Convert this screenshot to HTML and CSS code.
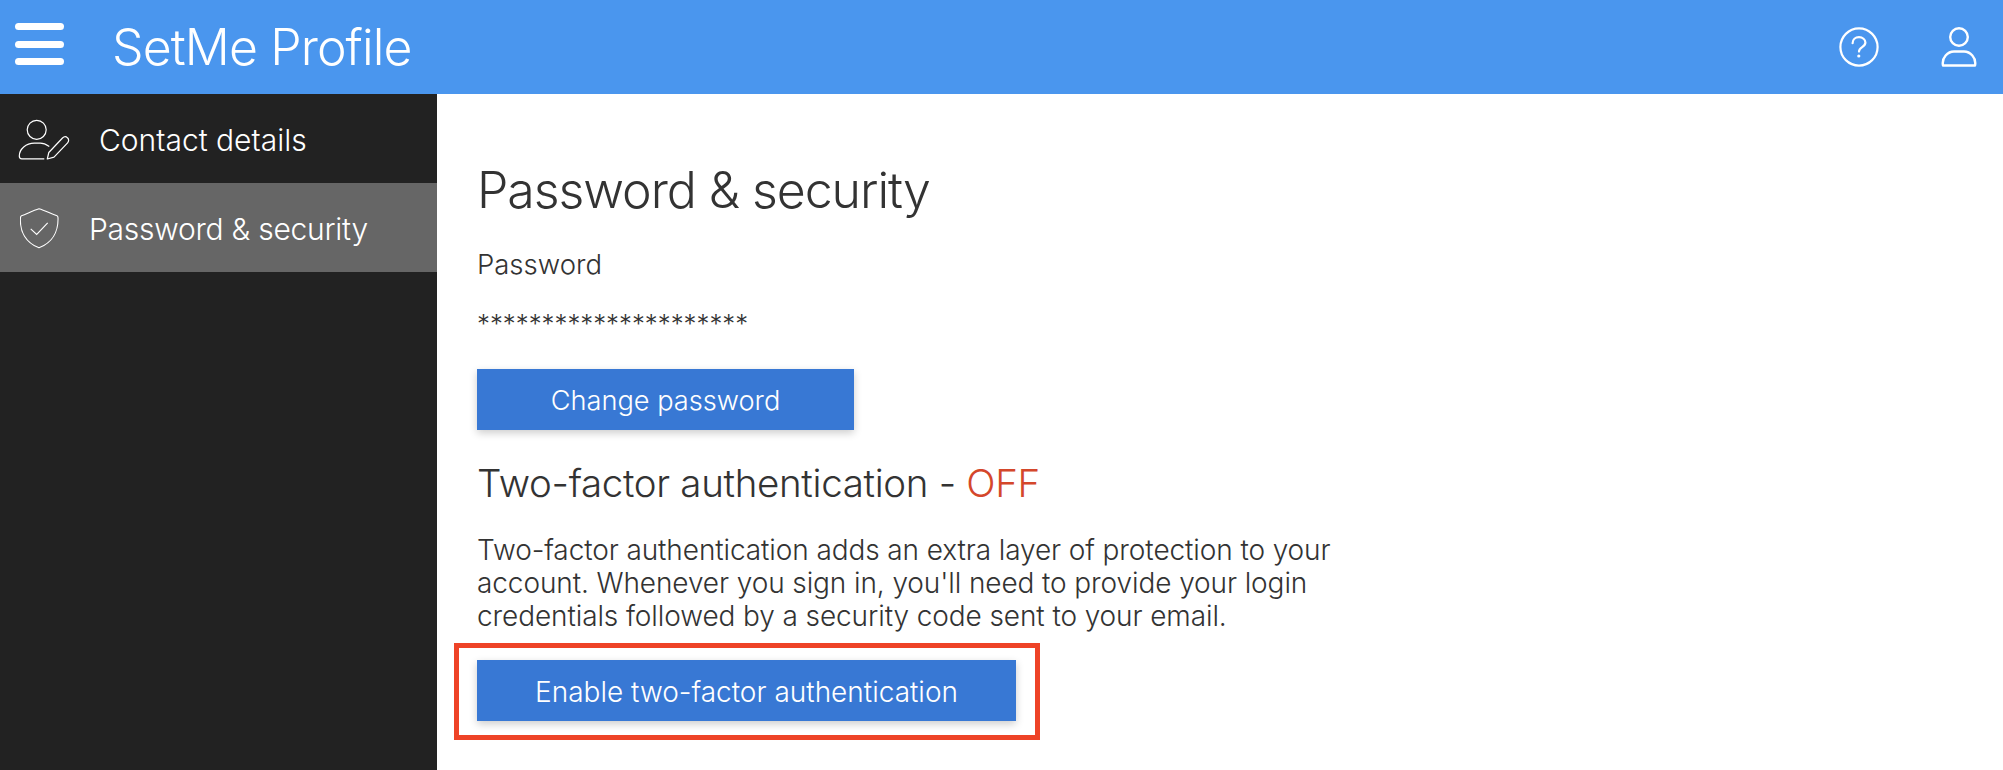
FILE: index.html
```html
<!DOCTYPE html>
<html lang="en">
<head>
    <meta charset="UTF-8">
    <title>SetMe Profile</title>
    <link rel="stylesheet" href="styles.css">
</head>
<body>
    <header class="topbar">
        <div class="menu-icon"><span></span><span></span><span></span></div>
        <div class="brand">SetMe Profile</div>
        <div class="topbar-icons">
            <svg class="top-icon" width="40" height="40" viewBox="0 0 40 40" fill="none" stroke="#fff" stroke-width="2.2">
                <circle cx="20" cy="20" r="18.600"/>
                <path d="M13.600 16.200c0-3.600 2.800-6 6.400-6s6.400 2.400 6.400 5.400c0 4.800-6.400 4.400-6.400 9" stroke-linecap="round"/>
                <circle cx="19.800" cy="29" r="1.600" fill="#fff" stroke="none"/>
            </svg>
            <svg class="top-icon" width="36" height="40" viewBox="0 0 36 40" fill="none" stroke="#fff" stroke-width="2.4">
                <circle cx="18" cy="10" r="8.800"/>
                <path d="M2 38.500c-1.600-8 5-14 11-14h10c6 0 12.600 6 11 14z" stroke-linejoin="round"/>
            </svg>
        </div>
    </header>
    <div class="layout">
        <nav class="sidebar">
            <a class="nav-item nav-contact">
                <svg width="52" height="42" viewBox="0 0 52 42" fill="none" stroke="#fff" stroke-width="1.2">
                    <circle cx="18.700" cy="11.800" r="9.500"/>
                    <path d="M31.300 28.500c-3-2-6-3.300-9-3.300h-6C8 25.200 1.300 31 1.300 38c0 1.800 .8 2.800 2.500 2.800h22.500"/>
                    <path d="M29.300 41l1.500-6.500L44.500 20c1.500-1.500 3.700-1.500 5-.2 1.500 1.400 1.500 3.500 .1 5L36 39.200z" stroke-linejoin="round"/>
                </svg>
                <span>Contact details</span>
            </a>
            <a class="nav-item nav-security active">
                <svg width="40" height="42" viewBox="0 0 40 42" fill="none" stroke="#fff" stroke-width="1.1">
                    <path d="M19 1.800C25 3.500 31 6.800 37 8.800c1 .4 1 1 1 2 .5 14-6 25-19 30C6 35.800 -.5 24.800 .5 10.800c0-1 0-1.600 1-2C7 6.800 13 3.500 19 1.800z" stroke-linejoin="round"/>
                    <path d="M10.700 21.800l6 5.700 11-11.700"/>
                </svg>
                <span>Password &amp; security</span>
            </a>
        </nav>
        <main class="content">
            <h1>Password &amp; security</h1>
            <p class="label">Password</p>
            <p class="stars">*********************</p>
            <button class="btn" type="button">Change password</button>
            <h2>Two-factor authentication - <span class="off">OFF</span></h2>
            <p class="about">Two-factor authentication adds an extra layer of protection to your account. Whenever you sign in, you'll need to provide your login credentials followed by a security code sent to your email.</p>
            <div class="btn-wrap">
                <button class="btn btn-wide" type="button">Enable two-factor authentication</button>
                <div class="highlight"></div>
            </div>
        </main>
    </div>
</body>
</html>
```

FILE: styles.css
```css
* {
    box-sizing: border-box;
}
html, body {
    height: 100%;
}
body {
    margin: 0;
    font-family: Inter, "Noto Sans", sans-serif;
    color: #333;
    background-color: #fff;
    display: flex;
    flex-direction: column;
    overflow: hidden;
}
.topbar {
    height: 94px;
    flex-shrink: 0;
    background-color: #4a96ee;
    color: #fff;
    display: flex;
    align-items: center;
    padding-left: 15px;
    padding-right: 26px;
}
.menu-icon {
    width: 49px;
    margin-bottom: 6px;
    display: flex;
    flex-direction: column;
    gap: 10.5px;
}
.menu-icon span {
    height: 7px;
    border-radius: 4px;
    background-color: #fff;
}
.brand {
    margin-left: 48px;
    font-size: 50px;
    font-weight: 300;
    letter-spacing: -0.9px;
}
.topbar-icons {
    margin-left: auto;
    display: flex;
    align-items: center;
    gap: 62px;
}
.layout {
    flex: 1;
    display: flex;
}
.sidebar {
    width: 437px;
    background-color: #222;
}
.nav-item {
    height: 89px;
    display: flex;
    align-items: center;
    gap: 29px;
    color: #fff;
    font-size: 30px;
    font-weight: 300;
}
.nav-item span {
    padding-top: 3px;
}
.nav-contact {
    padding-left: 18px;
}
.nav-security {
    padding-left: 20px;
    letter-spacing: -0.25px;
}
.active {
    background-color: #666;
}
.content {
    flex: 1;
    padding: 67px 0 0 40px;
}
h1 {
    margin: 0;
    font-size: 50px;
    font-weight: 350;
    line-height: 58px;
    letter-spacing: -1.05px;
}
h2 {
    margin: 30px 0 0;
    font-size: 38.5px;
    font-weight: 350;
    line-height: 46px;
    letter-spacing: -0.33px;
}
.off {
    color: #d4472b;
}
.label, .stars, .about {
    margin: 0;
    font-weight: 300;
}
.label {
    margin-top: 28px;
    font-size: 27.5px;
    line-height: 34px;
}
.stars {
    margin-top: 26px;
    font-size: 25.8px;
    line-height: 34px;
}
.about {
    margin-top: 28px;
    width: 900px;
    font-size: 28px;
    line-height: 33px;
    letter-spacing: -0.1px;
}
.btn {
    display: block;
    width: 377px;
    height: 61px;
    margin-top: 28px;
    padding-top: 3px;
    border: none;
    background-color: #3878d4;
    color: #fff;
    font-family: inherit;
    font-size: 27.2px;
    font-weight: 300;
    box-shadow: 0 3px 8px rgba(0, 0, 0, 0.2);
}
.btn-wrap {
    position: relative;
    margin-top: 27px;
    width: 539px;
}
.btn-wide {
    width: 539px;
    margin-top: 0;
    font-size: 28px;
}
.highlight {
    position: absolute;
    left: -23px;
    top: -17px;
    width: 586px;
    height: 97px;
    border: 5px solid #ee4327;
}
```
